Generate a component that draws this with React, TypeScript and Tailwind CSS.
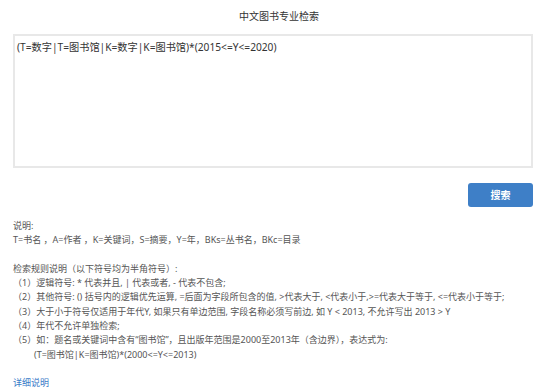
import React from "react";

export default function App() {
  return (
    <div className="w-[556px] h-[392px] bg-white overflow-hidden flex flex-col font-['Noto_Sans','Noto_Sans_CJK_SC',sans-serif]">
      <div className="h-[34px] flex items-start justify-center pt-[8px] pl-[2px] text-[10px] leading-[16px] text-[#333]">
        中文图书专业检索
      </div>
      <div className="mx-[13px] w-[520px] h-[134px] border-2 border-[#e8e8e8] px-[2px] pt-[3px] text-[10.2px] leading-[16px] text-[#333]">
        (T=数字|T=图书馆|K=数字|K=图书馆)*(2015&lt;=Y&lt;=2020)
      </div>
      <div className="flex justify-end pr-[23px] mt-[15px]">
        <button className="w-[65px] h-[24px] rounded-[3px] bg-[#3e7fc7] text-white text-[10px] leading-[24px] font-bold">
          搜索
        </button>
      </div>
      <div className="mt-[12px] px-[13px] text-[9px] leading-[14.3px] text-[#555]">
        <div>说明:</div>
        <div>T=书名 ，A=作者 ，K=关键词，S=摘要，Y=年，BKs=丛书名，BKc=目录</div>
        <div className="h-[14.3px]" />
        <div>检索规则说明（以下符号均为半角符号）:</div>
        <div>（1）逻辑符号: * 代表并且, | 代表或者, - 代表不包含;</div>
        <div>（2）其他符号: () 括号内的逻辑优先运算, =后面为字段所包含的值, &gt;代表大于, &lt;代表小于,&gt;=代表大于等于, &lt;=代表小于等于;</div>
        <div>（3）大于小于符号仅适用于年代Y, 如果只有单边范围, 字段名称必须写前边, 如 Y &lt; 2013, 不允许写出 2013 &gt; Y</div>
        <div>（4）年代不允许单独检索;</div>
        <div>（5）如：题名或关键词中含有“图书馆”，且出版年范围是2000至2013年（含边界），表达式为:</div>
        <div className="pl-[21px]">(T=图书馆|K=图书馆)*(2000&lt;=Y&lt;=2013)</div>
        <div className="h-[14.3px]" />
        <div className="text-[#3a7bc8]">详细说明</div>
      </div>
    </div>
  );
}
